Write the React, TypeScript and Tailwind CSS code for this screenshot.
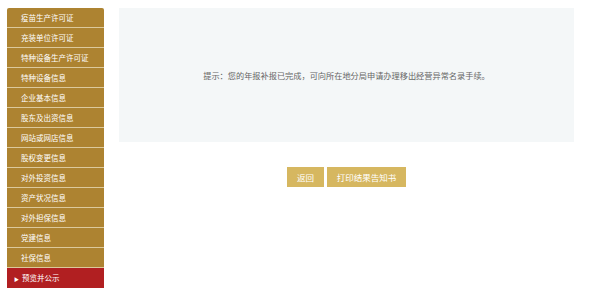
import React from "react";

const menu = [
  "疫苗生产许可证",
  "充装单位许可证",
  "特种设备生产许可证",
  "特种设备信息",
  "企业基本信息",
  "股东及出资信息",
  "网站或网店信息",
  "股权变更信息",
  "对外投资信息",
  "资产状况信息",
  "对外担保信息",
  "党建信息",
  "社保信息",
];

const App = () => {
  return (
    <div className="flex gap-[15px] pl-[7px] pt-[8px] bg-white min-h-[297px] font-['Noto_Sans_CJK_SC',sans-serif]">
      {/* SIDEBAR */}
      <ul className="w-[97px] shrink-0 text-white text-[7.5px] rounded-t-[2px] overflow-hidden">
        {menu.map((item) => (
          <li
            key={item}
            className="h-[20px] flex items-center pl-[14px] bg-[#ad8331] border-b border-[#dcc99c] leading-none"
          >
            {item}
          </li>
        ))}
        <li className="h-[20px] flex items-center pl-[7px] bg-[#b11f21] leading-none">
          <span className="text-[5px] mr-[3px]">▶</span>
          预览并公示
        </li>
      </ul>

      {/* CONTENT */}
      <div className="w-[455px] flex flex-col">
        <div className="h-[134px] bg-[#f4f7f8] flex items-center justify-center">
          <p className="text-[8.2px] text-[#666666] leading-none">
            提示：您的年报补报已完成，可向所在地分局申请办理移出经营异常名录手续。
          </p>
        </div>

        <div className="mt-[25px] flex justify-center gap-[3px]">
          <button className="h-[20px] w-[37px] bg-[#d6b760] text-white text-[8.5px] leading-none">
            返回
          </button>
          <button className="h-[20px] w-[79px] bg-[#d6b760] text-white text-[8.5px] leading-none">
            打印结果告知书
          </button>
        </div>
      </div>
    </div>
  );
};

export default App;
